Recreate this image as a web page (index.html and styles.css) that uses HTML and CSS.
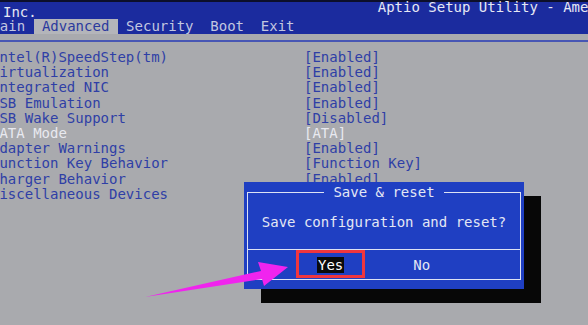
FILE: index.html
```html
<!DOCTYPE html>
<html lang="en">
<head>
    <meta charset="UTF-8">
    <meta name="viewport" content="width=device-width, initial-scale=1.0">
    <title>Aptio Setup Utility</title>
    <link rel="stylesheet" href="styles.css">
</head>
<body>
    <div class="screen">
        <!-- Naglowek z zakladkami -->
        <div class="header">
            <div class="header-top">
                <span class="vendor">Inc.</span>
                <span class="title">Aptio Setup Utility - American Megatrends, Inc.</span>
            </div>
            <div class="tabs">
                <span class="tab">Main</span>
                <span class="tab active">Advanced</span>
                <span class="tab">Security</span>
                <span class="tab">Boot</span>
                <span class="tab">Exit</span>
            </div>
        </div>
        <div class="rule"></div>

        <!-- Lista ustawien -->
        <div class="settings">
            <span>Intel(R)SpeedStep(tm)</span><span>[Enabled]</span>
            <span>Virtualization</span><span>[Enabled]</span>
            <span>Integrated NIC</span><span>[Enabled]</span>
            <span>USB Emulation</span><span>[Enabled]</span>
            <span>USB Wake Support</span><span>[Disabled]</span>
            <span class="selected">SATA Mode</span><span class="selected">[ATA]</span>
            <span>Adapter Warnings</span><span>[Enabled]</span>
            <span>Function Key Behavior</span><span>[Function Key]</span>
            <span>Charger Behavior</span><span>[Enabled]</span>
            <span>Miscellaneous Devices</span><span></span>
        </div>

        <!-- Okno dialogowe -->
        <div class="dialog">
            <fieldset class="frame">
                <legend>Save &amp; reset</legend>
                <div class="message">Save configuration and reset?</div>
                <div class="choices">
                    <span class="marker"><span class="choice current">Yes</span></span>
                    <span class="choice">No</span>
                </div>
            </fieldset>
        </div>

        <svg class="arrow" width="588" height="325" viewBox="0 0 588 325">
            <polygon points="145,297 261,271 258,262 288,267 264,286 262,279" fill="#f024ee"/>
        </svg>
    </div>
</body>
</html>
```

FILE: styles.css
```css
body {
    margin: 0;
    padding: 0;
    width: 588px;
    height: 325px;
    overflow: hidden;
    background-color: #a9aaae;
    font-family: "DejaVu Sans Mono", "Liberation Mono", monospace;
    font-size: 14px;
}
.screen {
    position: relative;
    width: 588px;
    height: 325px;
    overflow: hidden;
}
.header {
    background-color: #1b2b9e;
    border-top: 2px solid #0c0f2a;
    height: 32px;
    color: #e6e8f4;
}
.header-top {
    display: flex;
    align-items: flex-start;
    height: 17px;
    white-space: nowrap;
}
.vendor {
    margin-left: 3px;
    margin-top: 3px;
    line-height: 14px;
}
.title {
    margin-left: 341px;
    margin-top: -2px;
    line-height: 15px;
    flex-shrink: 0;
}
.tabs {
    display: flex;
    margin-left: -17px;
    white-space: pre;
}
.tab {
    padding: 0 8.4px;
    line-height: 15px;
    color: #c3c7e0;
}
.tab.active {
    background-color: #b4b5ba;
    color: #2b3a9e;
}
.rule {
    margin-top: 6px;
    height: 2px;
    background-color: #4756b4;
}
.settings {
    display: grid;
    grid-template-columns: 313px auto;
    margin-left: -9px;
    margin-top: 8px;
    line-height: 15.2px;
    color: #2f3fa6;
    white-space: pre;
}
.settings .selected {
    color: #e8e9f0;
}
.dialog {
    position: absolute;
    left: 244px;
    top: 182px;
    width: 280px;
    height: 107px;
    box-sizing: border-box;
    padding: 3px 3px 9px;
    background-color: #1f3fc2;
    box-shadow: 17px 14px 0 #070707;
    color: #e4e7f4;
}
.frame {
    margin: 0;
    padding: 0;
    height: 100%;
    box-sizing: border-box;
    border: 1.5px solid #dde2f4;
    min-width: 0;
}
.frame legend {
    margin: 0 auto;
    padding: 0 9px;
    line-height: 15px;
}
.message {
    padding: 15px 0 19px;
    line-height: 15px;
    text-align: center;
}
.choices {
    display: flex;
    align-items: center;
    border-top: 1.5px solid #dde2f4;
    padding-left: 48px;
    height: 28px;
    gap: 47px;
}
.marker {
    display: flex;
    padding: 4px 18px 2px;
    border: 3px solid #f0363e;
}
.choice {
    line-height: 16px;
    padding: 0 1px;
    position: relative;
    top: 1px;
}
.marker .choice {
    top: 0;
}
.choice.current {
    background-color: #0b0b0b;
    color: #ffffff;
}
.arrow {
    position: absolute;
    left: 0;
    top: 0;
}
```
